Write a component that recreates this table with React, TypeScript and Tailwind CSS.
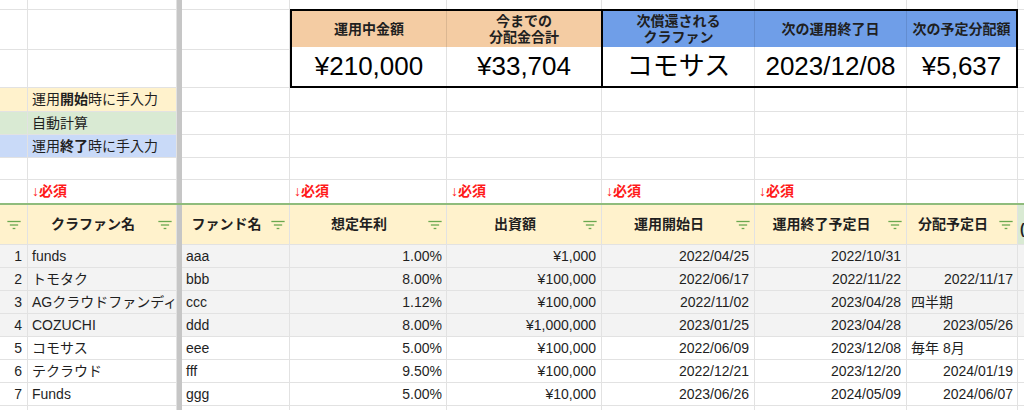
import { ReactNode } from 'react';

type Row = {
  no: number;
  name: string;
  fund: string;
  rate: string;
  amount: string;
  start: string;
  end: string;
  payout: string;
};

const rows: Row[] = [
  { no: 1, name: 'funds', fund: 'aaa', rate: '1.00%', amount: '¥1,000', start: '2022/04/25', end: '2022/10/31', payout: '' },
  { no: 2, name: 'トモタク', fund: 'bbb', rate: '8.00%', amount: '¥100,000', start: '2022/06/17', end: '2022/11/22', payout: '2022/11/17' },
  { no: 3, name: 'AGクラウドファンディング', fund: 'ccc', rate: '1.12%', amount: '¥100,000', start: '2022/11/02', end: '2023/04/28', payout: '四半期' },
  { no: 4, name: 'COZUCHI', fund: 'ddd', rate: '8.00%', amount: '¥1,000,000', start: '2023/01/25', end: '2023/04/28', payout: '2023/05/26' },
  { no: 5, name: 'コモサス', fund: 'eee', rate: '5.00%', amount: '¥100,000', start: '2022/06/09', end: '2023/12/08', payout: '毎年 8月' },
  { no: 6, name: 'テクラウド', fund: 'fff', rate: '9.50%', amount: '¥100,000', start: '2022/12/21', end: '2023/12/20', payout: '2024/01/19' },
  { no: 7, name: 'Funds', fund: 'ggg', rate: '5.00%', amount: '¥10,000', start: '2023/06/26', end: '2024/05/09', payout: '2024/06/07' },
];

const W = {
  a: 'w-[28px]',
  b: 'w-[149px]',
  c: 'w-[108px]',
  d: 'w-[157px]',
  e: 'w-[155px]',
  f: 'w-[153px]',
  g: 'w-[152px]',
  h: 'w-[111px]',
};

function Cell({ w, className = '', children }: { w: string; className?: string; children?: ReactNode }) {
  return (
    <div
      className={`${w} shrink-0 flex items-center overflow-hidden whitespace-nowrap border-r border-b border-[#e2e2e2] ${className}`}
    >
      {children}
    </div>
  );
}

function Bar() {
  return <div className="w-[5px] shrink-0 self-stretch bg-[#c6c6c6]" />;
}

function Rest({ className = '', children }: { className?: string; children?: ReactNode }) {
  return (
    <div className={`flex-1 flex items-center overflow-hidden whitespace-nowrap border-b border-[#e2e2e2] ${className}`}>
      {children}
    </div>
  );
}

function FilterIcon() {
  return (
    <svg width="14" height="10" viewBox="0 0 14 10" className="shrink-0">
      <g stroke="#6aa84f" strokeWidth="1.3" strokeLinecap="square">
        <line x1="1" y1="1.5" x2="13" y2="1.5" />
        <line x1="3.5" y1="5" x2="10.5" y2="5" />
        <line x1="6.3" y1="8.5" x2="7.7" y2="8.5" />
      </g>
    </svg>
  );
}

function EmptyRow({ h, children }: { h: string; children?: ReactNode }) {
  return (
    <div className={`flex ${h}`}>
      {children}
    </div>
  );
}

function Required() {
  return <span className="pl-[4px] font-bold text-[#ff1a1a]">↓必須</span>;
}

function HeadCell({ w, label }: { w: string; label: string }) {
  return (
    <Cell w={w} className="bg-[#fff2cc] pr-[4px]">
      <span className="flex-1 text-center font-bold">{label}</span>
      <FilterIcon />
    </Cell>
  );
}

export default function App() {
  const box = 'flex items-center justify-center text-center';
  return (
    <div
      className="w-[1024px] h-[410px] overflow-hidden bg-white text-[14px] text-[#1f1f1f]"
      style={{ fontFamily: '"Liberation Sans", "Noto Sans CJK JP", sans-serif' }}
    >
      {/* summary area */}
      <div className="flex">
        <div className="flex flex-col">
          {['h-[10px]', 'h-[40px]', 'h-[38px]'].map(h => (
            <div key={h} className={`flex ${h}`}>
              <Cell w={W.a} />
              <Cell w={W.b} />
              <Bar />
              <Cell w={W.c} />
            </div>
          ))}
        </div>
        <div className="flex flex-col w-[728px] shrink-0">
          <div className="flex h-[9px]">
            <div className="w-[157px] border-r border-[#e2e2e2]" />
            <div className="w-[155px] border-r border-[#e2e2e2]" />
            <div className="w-[153px] border-r border-[#e2e2e2]" />
            <div className="w-[152px] border-r border-[#e2e2e2]" />
            <div className="w-[111px] border-r border-[#e2e2e2]" />
          </div>
          <div className="h-[79px] border-2 border-black flex flex-col font-bold">
            <div className="flex h-[39px] leading-[16px]">
              <div className={`${box} w-[155px] bg-[#f4cca3] border-r border-black/10`}>運用中金額</div>
              <div className={`${box} w-[156px] bg-[#f4cca3] border-r-2 border-black`}>
                今までの
                <br />
                分配金合計
              </div>
              <div className={`${box} w-[152px] bg-[#6f9ee8] border-r border-black/10`}>
                次償還される
                <br />
                クラファン
              </div>
              <div className={`${box} w-[152px] bg-[#6f9ee8] border-r border-black/10`}>次の運用終了日</div>
              <div className={`${box} w-[109px] bg-[#6f9ee8]`}>次の予定分配額</div>
            </div>
            <div className="flex flex-1 text-[26px] font-normal text-black">
              <div className={`${box} w-[155px] border-r border-[#e2e2e2]`}>¥210,000</div>
              <div className={`${box} w-[156px] border-r-2 border-black`}>¥33,704</div>
              <div className={`${box} w-[152px] border-r border-[#e2e2e2]`}>コモサス</div>
              <div className={`${box} w-[152px] border-r border-[#e2e2e2]`}>2023/12/08</div>
              <div className={`${box} w-[109px]`}>¥5,637</div>
            </div>
          </div>
        </div>
        <div className="flex-1 flex flex-col">
          <div className="h-[10px] border-b border-[#e2e2e2]" />
          <div className="h-[40px] border-b border-[#e2e2e2]" />
          <div className="h-[38px] border-b border-[#e2e2e2]" />
        </div>
      </div>

      {/* legend rows */}
      {[
        { h: 'h-[24px]', bg: 'bg-[#fff2cc]', label: <>運用<b>開始</b>時に手入力</> },
        { h: 'h-[23px]', bg: 'bg-[#d9ead3]', label: <>自動計算</> },
        { h: 'h-[23px]', bg: 'bg-[#c9daf8]', label: <>運用<b>終了</b>時に手入力</> },
        { h: 'h-[22px]', bg: '', label: null },
      ].map((r, i) => (
        <EmptyRow key={i} h={r.h}>
          <Cell w={W.a} className={r.bg} />
          <Cell w={W.b} className={`${r.bg} pl-[4px]`}>
            {r.label}
          </Cell>
          <Bar />
          <Cell w={W.c} />
          <Cell w={W.d} />
          <Cell w={W.e} />
          <Cell w={W.f} />
          <Cell w={W.g} />
          <Cell w={W.h} />
          <Rest />
        </EmptyRow>
      ))}

      <EmptyRow h="h-[23px]">
        <Cell w={W.a} className="border-b-0" />
        <Cell w={W.b} className="border-b-0">
          <Required />
        </Cell>
        <Bar />
        <Cell w={W.c} className="border-b-0" />
        <Cell w={W.d} className="border-b-0">
          <Required />
        </Cell>
        <Cell w={W.e} className="border-b-0">
          <Required />
        </Cell>
        <Cell w={W.f} className="border-b-0">
          <Required />
        </Cell>
        <Cell w={W.g} className="border-b-0">
          <Required />
        </Cell>
        <Cell w={W.h} className="border-b-0" />
        <Rest className="border-b-0" />
      </EmptyRow>

      {/* table header */}
      <div className="flex h-[42px] border-t-2 border-[#8fbc7c]">
        <Cell w={W.a} className="bg-[#fff2cc] justify-center">
          <FilterIcon />
        </Cell>
        <HeadCell w={W.b} label="クラファン名" />
        <Bar />
        <HeadCell w={W.c} label="ファンド名" />
        <HeadCell w={W.d} label="想定年利" />
        <HeadCell w={W.e} label="出資額" />
        <HeadCell w={W.f} label="運用開始日" />
        <HeadCell w={W.g} label="運用終了予定日" />
        <HeadCell w={W.h} label="分配予定日" />
        <Rest className="bg-[#d9ead3] font-bold items-start pt-[16px] pl-[2px] leading-[16px]">(</Rest>
      </div>

      {rows.map(r => {
        const bg = r.no <= 4 ? 'bg-[#f3f3f3]' : '';
        const isDate = /^\d{4}\//.test(r.payout);
        return (
          <div key={r.no} className="flex h-[23px]">
            <Cell w={W.a} className={`${bg} justify-end pr-[5px]`}>{r.no}</Cell>
            <Cell w={W.b} className={`${bg} pl-[4px]`}>{r.name}</Cell>
            <Bar />
            <Cell w={W.c} className={`${bg} pl-[4px]`}>{r.fund}</Cell>
            <Cell w={W.d} className={`${bg} justify-end pr-[4px]`}>{r.rate}</Cell>
            <Cell w={W.e} className={`${bg} justify-end pr-[5px]`}>{r.amount}</Cell>
            <Cell w={W.f} className={`${bg} justify-end pr-[5px]`}>{r.start}</Cell>
            <Cell w={W.g} className={`${bg} justify-end pr-[5px]`}>{r.end}</Cell>
            <Cell w={W.h} className={`${bg} ${isDate ? 'justify-end pr-[4px]' : 'pl-[4px]'}`}>{r.payout}</Cell>
            <Rest className={bg} />
          </div>
        );
      })}
      <div className="flex h-[10px]">
        <Cell w={W.a} />
        <Cell w={W.b} />
        <Bar />
        <Cell w={W.c} />
        <Cell w={W.d} />
        <Cell w={W.e} />
        <Cell w={W.f} />
        <Cell w={W.g} />
        <Cell w={W.h} />
        <Rest />
      </div>
    </div>
  );
}
